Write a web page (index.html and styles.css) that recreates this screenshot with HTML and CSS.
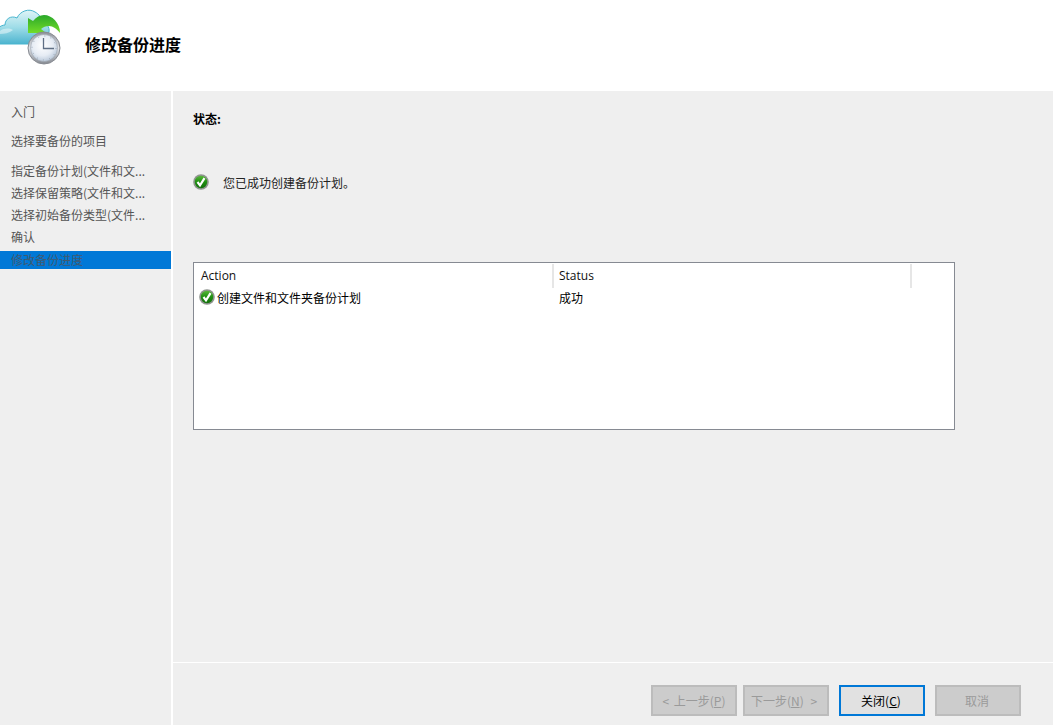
FILE: index.html
```html
<!DOCTYPE html>
<html lang="zh-CN">
<head>
<meta charset="utf-8">
<title>修改备份进度</title>
<link rel="stylesheet" href="styles.css">
</head>
<body>
<div class="window">
  <header class="header">
    <svg class="header-icon" width="62" height="66" viewBox="0 0 62 66" aria-hidden="true">
      <defs>
        <linearGradient id="cloudFill" x1="0" y1="0" x2="0" y2="1">
          <stop offset="0" stop-color="#dff4f7"/>
          <stop offset="0.5" stop-color="#9fdde8"/>
          <stop offset="1" stop-color="#4db4cf"/>
        </linearGradient>
        <linearGradient id="arrowFill" x1="0" y1="0" x2="0" y2="1">
          <stop offset="0" stop-color="#2aa82a"/>
          <stop offset="1" stop-color="#72dc28"/>
        </linearGradient>
        <radialGradient id="clockFace" cx="0.45" cy="0.4" r="0.7">
          <stop offset="0" stop-color="#ffffff"/>
          <stop offset="0.55" stop-color="#e6ecf4"/>
          <stop offset="1" stop-color="#a9bbd0"/>
        </radialGradient>
        <linearGradient id="clockRim" x1="0" y1="0" x2="0" y2="1">
          <stop offset="0" stop-color="#8d9199"/>
          <stop offset="0.5" stop-color="#e2e4e8"/>
          <stop offset="1" stop-color="#858990"/>
        </linearGradient>
        <linearGradient id="checkFill" x1="0" y1="0" x2="0" y2="1">
          <stop offset="0" stop-color="#58b83a"/>
          <stop offset="0.5" stop-color="#1f8f12"/>
          <stop offset="1" stop-color="#12700a"/>
        </linearGradient>
      </defs>
      <path d="M-3 44 L-3 29 C0 26 3 25 5 25 C5 19 11 15 17 18 C20 11 29 8 35 12 C39 14 42 18 41 22 C46 22 50 27 49 32 L40 44 Z" fill="url(#cloudFill)" stroke="#49b5cf" stroke-width="1"/>
      <path d="M0 31 C4 28 9 28 13 30 C9 33 4 34 0 34 Z" fill="#ffffff" opacity="0.45"/>
      <path d="M60 33 C60 23 52 15 44 15 C40 15 36 17 33 21 L28 18 L28 33 L46 33 L41 29 C43 27 46 26 49 26 C53 26 57 29 60 33 Z" fill="url(#arrowFill)"/>
      <circle cx="44" cy="48" r="16" fill="url(#clockRim)" stroke="#878b92" stroke-width="1"/>
      <circle cx="44" cy="48" r="13.500" fill="url(#clockFace)" stroke="#9aa2ad" stroke-width="0.600"/>
      <circle cx="44" cy="48" r="12" fill="none" stroke="#9aa5b3" stroke-width="1" stroke-dasharray="1 5.283"/>
      <path d="M43.500 38 V48.500 H54" fill="none" stroke="#5f6f85" stroke-width="1.300"/>
    </svg>
    <h1 class="title">修改备份进度</h1>
  </header>
  <div class="main">
    <nav class="sidebar">
      <div class="step step-first">入门</div>
      <div class="step step-second">选择要备份的项目</div>
      <div class="step-group">
        <div class="step">指定备份计划(文件和文...</div>
        <div class="step">选择保留策略(文件和文...</div>
        <div class="step">选择初始备份类型(文件...</div>
        <div class="step">确认</div>
        <div class="step step-active">修改备份进度</div>
      </div>
    </nav>
    <section class="content">
      <div class="panel">
        <div class="status-label">状态:</div>
        <div class="status-line">
          <svg class="check" viewBox="0 0 16 16" aria-hidden="true">
            <circle cx="8" cy="8" r="7.800" fill="#8f948f"/>
            <circle cx="8" cy="8" r="6.200" fill="url(#checkFill)"/>
            <path d="M4.500 8 L7 11.300 L11.500 4.200" fill="none" stroke="#fff" stroke-width="2.200"/>
          </svg>
          <span>您已成功创建备份计划。</span>
        </div>
        <div class="table">
          <div class="table-head">
            <div class="cell-head col-action">Action</div>
            <div class="cell-head col-status">Status</div>
          </div>
          <div class="table-row">
            <div class="col-action cell-action">
              <svg class="check" viewBox="0 0 16 16" aria-hidden="true">
                <circle cx="8" cy="8" r="7.800" fill="#8f948f"/>
                <circle cx="8" cy="8" r="6.200" fill="url(#checkFill)"/>
                <path d="M4.500 8 L7 11.300 L11.500 4.200" fill="none" stroke="#fff" stroke-width="2.200"/>
              </svg>
              <span>创建文件和文件夹备份计划</span>
            </div>
            <div class="col-status cell-status">成功</div>
          </div>
        </div>
      </div>
      <footer class="footer">
        <button class="btn btn-prev" disabled>&lt; 上一步(<u>P</u>)</button>
        <button class="btn btn-next" disabled>下一步(<u>N</u>) &gt;</button>
        <button class="btn btn-primary btn-gap">关闭(<u>C</u>)</button>
        <button class="btn btn-gap" disabled>取消</button>
      </footer>
    </section>
  </div>
</div>
</body>
</html>
```

FILE: styles.css
```css
* { box-sizing: border-box; }
html, body { margin: 0; padding: 0; height: 100%; }
body {
  background: #fff;
  color: #000;
  font-family: "Noto Sans CJK SC", "Open Sans", sans-serif;
  font-size: 12px;
  overflow: hidden;
}
.window { display: flex; flex-direction: column; width: 1053px; height: 725px; }
.header {
  height: 91px;
  flex: none;
  display: flex;
  align-items: flex-start;
  background: #fff;
  overflow: hidden;
}
.header-icon { flex: none; }
.title {
  margin: 32px 0 0 23px;
  font-size: 16px;
  line-height: 24px;
  font-weight: 700;
}
.main { flex: 1; display: flex; gap: 2px; min-height: 0; }
.sidebar {
  width: 171px;
  flex: none;
  background: #efefef;
  padding-top: 10px;
  color: #555;
}
.step {
  height: 22px;
  line-height: 22px;
  padding-left: 11px;
  white-space: nowrap;
  overflow: hidden;
}
.step-second { margin-top: 7px; }
.step-group { margin-top: 8px; }
.step-active {
  height: 18px;
  line-height: 17px;
  margin-top: 3px;
  background: #0078d7;
  color: #3f5a70;
}
.content { flex: 1; display: flex; flex-direction: column; background: #efefef; }
.panel { height: 571px; flex: none; padding: 18px 0 0 20px; }
.status-label { font-weight: 700; line-height: 20px; height: 20px; }
.status-line {
  display: flex;
  align-items: center;
  gap: 14px;
  margin-top: 43px;
  height: 20px;
  color: #222;
}
.check { width: 16px; height: 16px; flex: none; }
.table {
  width: 762px;
  height: 168px;
  margin-top: 70px;
  background: #fff;
  border: 1px solid #868a92;
}
.table-head { display: flex; height: 24px; margin-top: 1px; }
.cell-head {
  height: 24px;
  line-height: 24px;
  padding-left: 7px;
  border-right: 2px solid #e6e6e6;
  color: #111;
  font-family: "Open Sans", sans-serif;
}
.col-status.cell-head { padding-left: 5px; }
.col-action { width: 360px; flex: none; }
.col-status { width: 358px; flex: none; }
.table-row { display: flex; height: 18px; align-items: center; }
.cell-action { display: flex; align-items: center; gap: 2px; padding-left: 5px; }
.cell-status { padding-left: 5px; }
.footer {
  flex: 1;
  border-top: 1px solid #fff;
  display: flex;
  align-items: flex-start;
  padding: 22px 0 0 478px;
  gap: 6px;
}
.btn {
  width: 86px;
  height: 31px;
  padding: 0;
  background: #cccccc;
  border: 2px solid #bcbcbc;
  color: #9a9a9a;
  font: inherit;
}
.btn-prev { word-spacing: 2px; }
.btn-next { word-spacing: 4px; padding-right: 4px; }
.btn-gap { margin-left: 4px; padding-right: 2px; }
.btn-primary { background: #e1e1e1; border-color: #0078d7; color: #000; }
```
